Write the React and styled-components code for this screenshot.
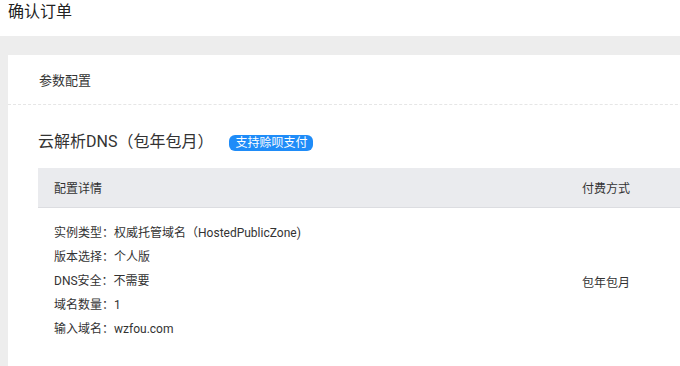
import React from 'react'
import styled, { createGlobalStyle } from 'styled-components'

const GlobalStyle = createGlobalStyle`
  html, body {
    margin: 0;
    padding: 0;
    background: #fff;
    font-family: Roboto, "Noto Sans CJK SC", sans-serif;
    color: #333;
  }
`

const Page = styled.div`
  width: 680px;
  height: 366px;
  overflow: hidden;
  background: #ededed;
`

const TopBar = styled.div`
  height: 36px;
  background: #fff;
  padding: 2px 0 0 8px;
  box-sizing: border-box;
  font-size: 16px;
  line-height: 20px;
  color: #222;
`

const Body = styled.div`
  padding: 19px 0 0 8px;
`

const Card = styled.div`
  background: #fff;
  width: 700px;
  height: 320px;
`

const CardHead = styled.div`
  height: 50px;
  padding-left: 31px;
  display: flex;
  align-items: center;
  font-size: 13px;
  color: #333;
  border-bottom: 1px dashed #e6e6e6;
  box-sizing: border-box;
`

const Section = styled.div`
  padding: 28px 0 0 30px;
`

const ProductTitle = styled.div`
  display: flex;
  align-items: center;
  font-size: 16px;
  line-height: 18px;
  color: #333;
  gap: 16px;
`

const Badge = styled.span`
  display: inline-flex;
  align-items: center;
  justify-content: center;
  height: 16px;
  width: 84px;
  border-radius: 6px;
  background: #1f8cf8;
  color: #fff;
  font-size: 12px;
  margin-top: 1px;
`

const Table = styled.div`
  margin-top: 17px;
`

const HeadRow = styled.div`
  display: grid;
  grid-template-columns: 528px 1fr;
  height: 40px;
  align-items: center;
  background: #eaebee;
  border-bottom: 1px solid #dcdde1;
  box-sizing: border-box;
  padding-left: 16px;
  font-size: 12px;
  color: #333;
`

const BodyRow = styled.div`
  display: grid;
  grid-template-columns: 528px 1fr;
  align-items: center;
  padding: 13px 0 0 16px;
  font-size: 12px;
  color: #333;
`

const Specs = styled.div`
  display: flex;
  flex-direction: column;
`

const Spec = styled.div`
  height: 24px;
  line-height: 24px;
`

const items = [
  ['实例类型', '权威托管域名（HostedPublicZone)'],
  ['版本选择', '个人版'],
  ['DNS安全', '不需要'],
  ['域名数量', '1'],
  ['输入域名', 'wzfou.com'],
]

export default function App() {
  return (
    <>
      <GlobalStyle />
      <Page>
        <TopBar>确认订单</TopBar>
        <Body>
          <Card>
            <CardHead>参数配置</CardHead>
            <Section>
              <ProductTitle>
                云解析DNS（包年包月）
                <Badge>支持赊呗支付</Badge>
              </ProductTitle>
              <Table>
                <HeadRow>
                  <span>配置详情</span>
                  <span>付费方式</span>
                </HeadRow>
                <BodyRow>
                  <Specs>
                    {items.map(([k, v]) => (
                      <Spec key={k}>{k}：{v}</Spec>
                    ))}
                  </Specs>
                  <span>包年包月</span>
                </BodyRow>
              </Table>
            </Section>
          </Card>
        </Body>
      </Page>
    </>
  )
}
